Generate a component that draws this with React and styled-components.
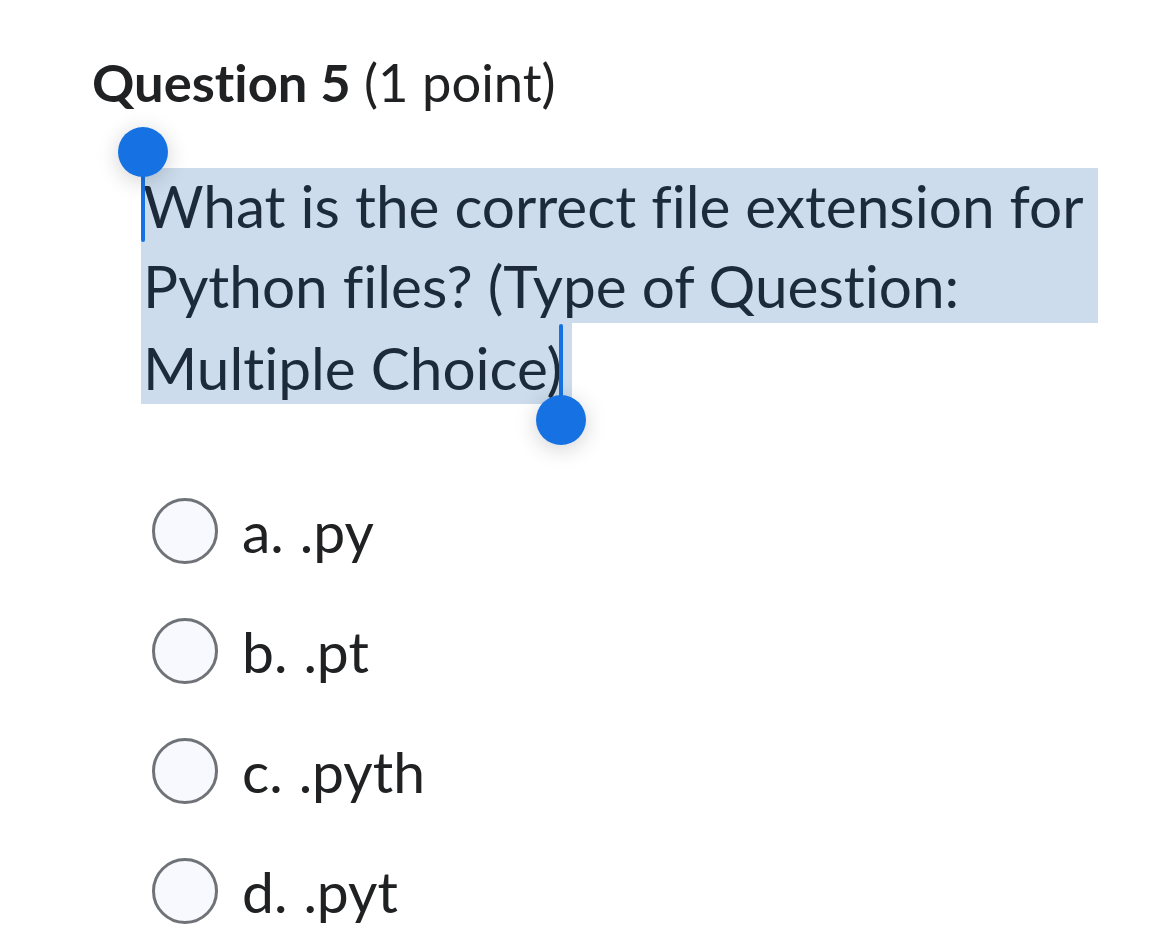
import React from "react";
import styled, { createGlobalStyle } from "styled-components";

const Global = createGlobalStyle`
  html, body { margin: 0; padding: 0; background: #ffffff; }
  body {
    font-family: Lato, "Noto Sans", sans-serif;
    -webkit-font-smoothing: antialiased;
    font-variant-ligatures: none;
    font-feature-settings: "liga" 0, "clig" 0;
  }
`;

const Page = styled.main`
  width: 1170px;
  height: 947px;
  overflow: hidden;
  padding: 51px 0 0 92px;
  box-sizing: border-box;
  display: flex;
  flex-direction: column;
`;

const Heading = styled.h2`
  margin: 0;
  font-size: 52.5px;
  line-height: 62px;
  font-weight: 400;
  color: #202122;
`;

const Strong = styled.span`
  font-weight: 700;
`;

const QuestionBody = styled.div`
  position: relative;
  margin: 55px 0 0 49px;
  width: 957px;
  font-size: 58.5px;
  color: #1c2a3a;
`;

const SelLine = styled.div`
  background: #ccdcec;
  display: ${(p) => (p.$last ? "inline-block" : "block")};
  vertical-align: top;
  padding-left: 2px;
  padding-right: ${(p) => (p.$last ? "10px" : "0")};
  height: ${(p) => p.$h}px;
  line-height: ${(p) => p.$lh}px;
  white-space: nowrap;
`;

const Handle = styled.div`
  position: absolute;
  width: 4px;
  background: #1672e3;
  border-radius: 2px;
`;

const Knob = styled.div`
  position: absolute;
  width: 50px;
  height: 50px;
  border-radius: 50%;
  background: #1672e3;
  box-shadow: 0 4px 22px rgba(0, 0, 0, 0.18);
`;

const Options = styled.div`
  display: flex;
  flex-direction: column;
  gap: 54px;
  margin: 94px 0 0 60px;
`;

const Option = styled.label`
  display: flex;
  align-items: center;
  gap: 24px;
  height: 66px;
  font-size: 57px;
  color: #202122;
`;

const Radio = styled.span`
  width: 66px;
  height: 66px;
  box-sizing: border-box;
  border-radius: 50%;
  border: 3px solid #6f7377;
  background: #f8f9fe;
  flex-shrink: 0;
`;

const Letter = styled.span`
  margin-right: 16px;
`;

const options = [
  ["a.", ".py"],
  ["b.", ".pt"],
  ["c.", ".pyth"],
  ["d.", ".pyt"],
];

export default function App() {
  return (
    <Page>
      <Global />
      <Heading>
        <Strong>Question 5</Strong> (1 point)
      </Heading>
      <QuestionBody>
        <SelLine $h={80} $lh={75}>What is the correct file extension for</SelLine>
        <SelLine $h={75} $lh={75}>Python files? (Type of Question:</SelLine>
        <SelLine $h={81} $lh={89} $last>Multiple Choice)</SelLine>
        <Handle style={{ left: 0, top: 2, height: 72 }} />
        <Knob style={{ left: -23, top: -41 }} />
        <Handle style={{ left: 418, top: 156, height: 80 }} />
        <Knob style={{ left: 395, top: 227 }} />
      </QuestionBody>
      <Options>
        {options.map(([l, t]) => (
          <Option key={l}>
            <Radio />
            <span>
              <Letter>{l}</Letter>
              {t}
            </span>
          </Option>
        ))}
      </Options>
    </Page>
  );
}
